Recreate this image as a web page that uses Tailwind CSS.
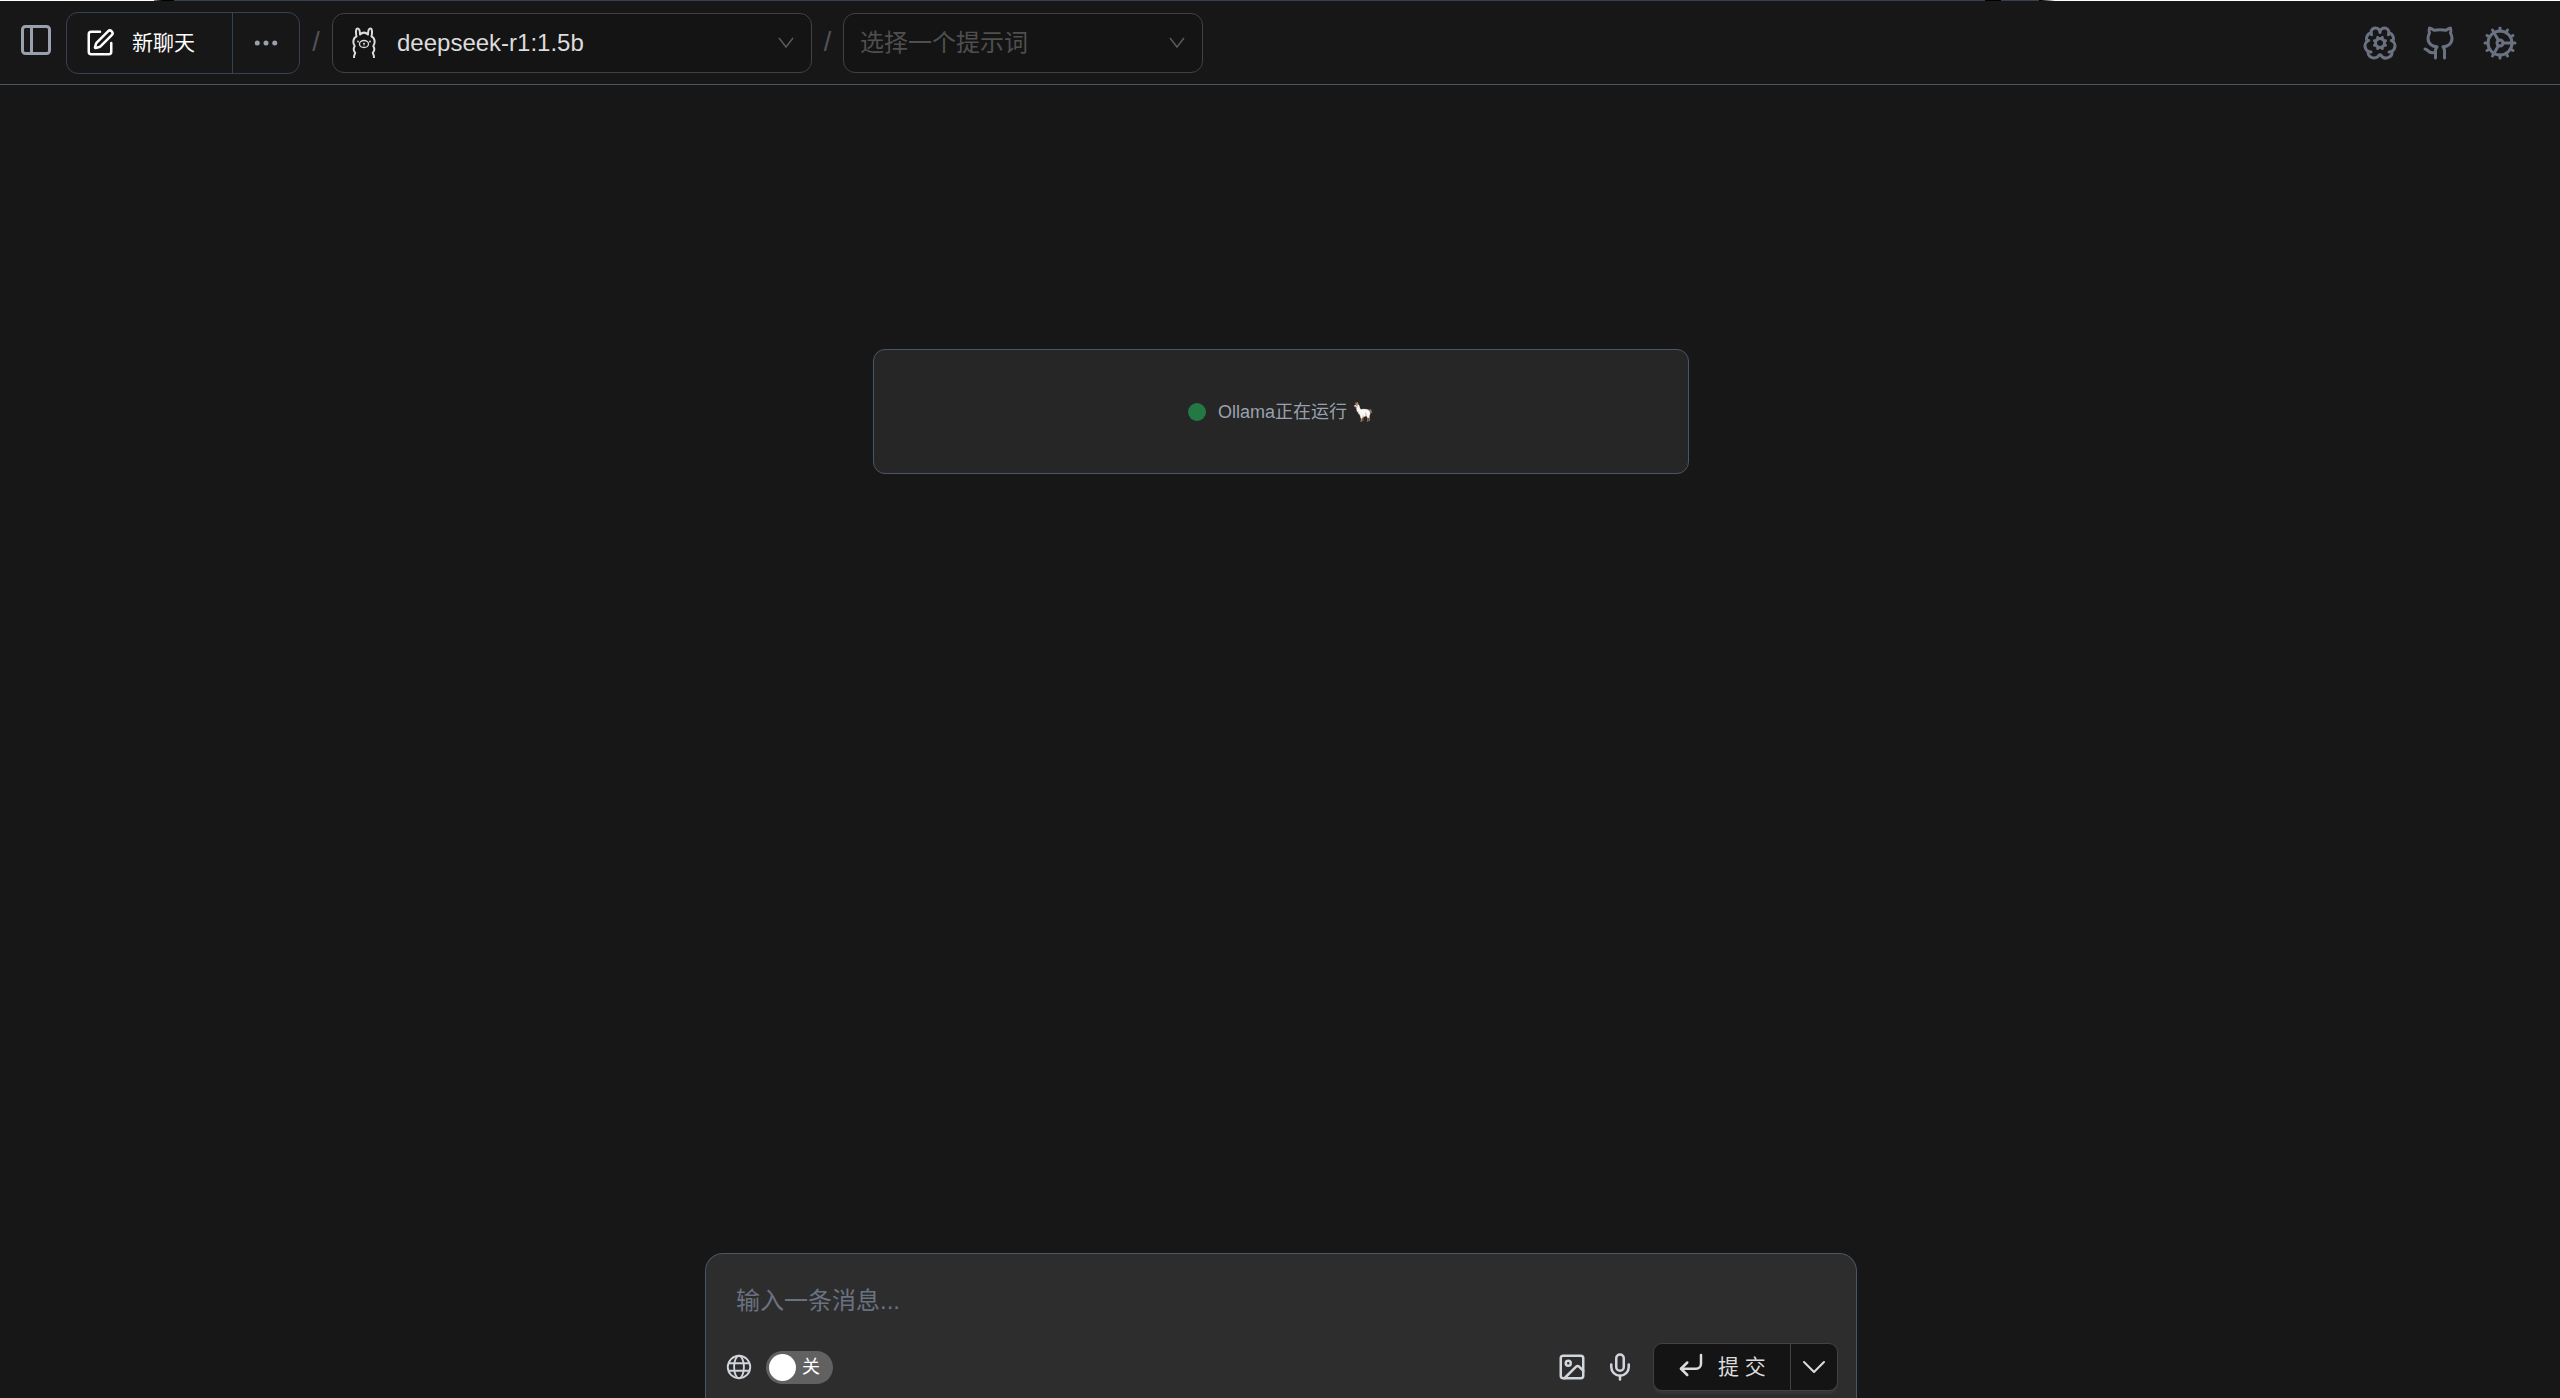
<!DOCTYPE html>
<html lang="zh-CN">
  <head>
    <meta charset="UTF-8" />
    <meta name="viewport" content="width=device-width, initial-scale=1.0" />
    <title>新聊天</title>
    <script src="https://cdn.jsdelivr.net/npm/@tailwindcss/browser@4"></script>
  </head>
  <body
    class="h-screen flex flex-col overflow-hidden bg-[#171717] font-['Liberation_Sans','Noto_Sans_CJK_SC',sans-serif] text-white"
  >
    <!-- browser frame edge -->
    <div class="flex h-px shrink-0 bg-[#374151]">
      <div class="w-[6%] bg-white"></div>
      <div class="w-5 bg-linear-to-r from-[#888888] via-black to-black"></div>
      <div class="flex-1"></div>
      <div class="w-4 bg-black"></div>
      <div class="w-[38px]"></div>
      <div class="w-4 bg-linear-to-r from-black to-white"></div>
      <div class="w-[505px] bg-white"></div>
    </div>

    <header
      class="flex h-[84px] shrink-0 items-center border-b border-gray-600 pl-[18px] pr-[42px]"
    >
      <button type="button" aria-label="Sidebar" class="mb-[6px] text-gray-400">
        <svg class="size-9" viewBox="0 0 24 24" fill="none" stroke="currentColor" stroke-width="2" stroke-linecap="round" stroke-linejoin="round">
          <rect width="18" height="18" x="3" y="3" rx="2" />
          <path d="M9 3v18" />
        </svg>
      </button>

      <div class="ml-3 flex h-[62px] rounded-xl border border-gray-700">
        <button type="button" class="flex w-[166px] items-center gap-[17px] border-r border-gray-700 pl-[18px] text-[21px]">
          <svg class="size-[30px]" viewBox="0 0 24 24" fill="none" stroke="currentColor" stroke-width="2" stroke-linecap="round" stroke-linejoin="round">
            <path d="M12 3H5a2 2 0 0 0-2 2v14a2 2 0 0 0 2 2h14a2 2 0 0 0 2-2v-7" />
            <path d="M18.375 2.625a1 1 0 0 1 3 3l-9.013 9.014a2 2 0 0 1-.853.505l-2.873.84a.5.5 0 0 1-.62-.62l.84-2.873a2 2 0 0 1 .506-.852z" />
          </svg>
          新聊天
        </button>
        <button type="button" aria-label="More" class="flex w-[66px] items-center justify-center text-gray-400">
          <svg class="size-[30px]" viewBox="0 0 24 24" fill="currentColor" stroke="currentColor" stroke-width="2">
            <circle cx="12" cy="12" r="1" />
            <circle cx="19" cy="12" r="1" />
            <circle cx="5" cy="12" r="1" />
          </svg>
        </button>
      </div>

      <span class="w-8 text-center text-[27px] text-zinc-600">/</span>

      <div class="relative h-[60px] w-[480px]">
        <select aria-label="Model" class="size-full appearance-none rounded-xl border border-[#424242] bg-[#141414] pl-16 text-2xl text-[#dcdcdc]">
          <option>deepseek-r1:1.5b</option>
        </select>
        <svg class="pointer-events-none absolute left-5 top-[14px] h-8 w-6 text-[#dcdcdc]" viewBox="0 0 24 32" fill="none" stroke="currentColor" stroke-width="2" stroke-linejoin="round">
          <path d="M2 31c0-2 .3-3.500 1.200-5C1.500 24 1.500 21 2.700 19 .4 16 1.200 10.500 4.500 9.500 3.500 5 4 1.500 5.500 1.500S8 4 8 7.500c2.500-2.300 5.500-2.300 8 0C16 4 17 1.500 18.500 1.500S20.500 5 19.500 9.500c3.300 1 4.100 6.500 1.800 9.500 1.200 2 1.200 5-.5 7 .9 1.500 1.200 3 1.200 5" />
          <ellipse cx="12" cy="17" rx="4.500" ry="3.500" stroke-width="1.300" />
          <path d="M11 16l1 .8 1-.8M12 16.800v1.700" stroke-width="1" />
          <circle cx="6" cy="14.500" r=".9" fill="currentColor" stroke="none" />
          <circle cx="18" cy="14.500" r=".9" fill="currentColor" stroke="none" />
        </svg>
        <svg class="pointer-events-none absolute right-[17px] top-[21px] size-[18px] text-[#5a5a5a]" viewBox="0 0 18 18" fill="none" stroke="currentColor" stroke-width="1.500">
          <path d="M2 4l7 9 7-9" />
        </svg>
      </div>

      <span class="w-[31px] text-center text-[27px] text-zinc-600">/</span>

      <div class="relative h-[60px] w-[360px]">
        <select aria-label="Prompt" class="size-full appearance-none rounded-xl border border-[#424242] bg-[#141414] pl-4 text-2xl text-[#4f4f4f]">
          <option>选择一个提示词</option>
        </select>
        <svg class="pointer-events-none absolute right-[17px] top-[21px] size-[18px] text-[#5a5a5a]" viewBox="0 0 18 18" fill="none" stroke="currentColor" stroke-width="1.500">
          <path d="M2 4l7 9 7-9" />
        </svg>
      </div>

      <nav class="ml-auto flex gap-6 text-gray-500">
        <a href="#" aria-label="Models">
          <svg class="size-9" viewBox="0 0 24 24" fill="none" stroke="currentColor" stroke-width="2" stroke-linecap="round" stroke-linejoin="round">
            <path d="m10.852 14.772-.383.923" />
            <path d="m10.852 9.228-.383-.923" />
            <path d="m13.148 14.772.382.924" />
            <path d="m13.531 8.305-.383.923" />
            <path d="m14.772 10.852.923-.383" />
            <path d="m14.772 13.148.923.383" />
            <path d="M17.598 6.500A3 3 0 1 0 12 5a3 3 0 0 0-5.630-1.446 3 3 0 0 0-.368 1.571 4 4 0 0 0-2.525 5.771" />
            <path d="M17.998 5.125a4 4 0 0 1 2.525 5.771" />
            <path d="M19.505 10.294a4 4 0 0 1-1.500 7.706" />
            <path d="M4.032 17.483A4 4 0 0 0 11.464 20c.18-.311.892-.311 1.072 0a4 4 0 0 0 7.432-2.516" />
            <path d="M4.500 10.291A4 4 0 0 0 6 18" />
            <path d="M6.002 5.125a3 3 0 0 0 .4 1.375" />
            <path d="m9.228 10.852-.923-.383" />
            <path d="m9.228 13.148-.923.383" />
            <circle cx="12" cy="12" r="3" />
          </svg>
        </a>
        <a href="#" aria-label="GitHub">
          <svg class="size-9" viewBox="0 0 24 24" fill="none" stroke="currentColor" stroke-width="2" stroke-linecap="round" stroke-linejoin="round">
            <path d="M15 22v-4a4.800 4.800 0 0 0-1-3.500c3 0 6-2 6-5.500.08-1.250-.27-2.480-1-3.500.28-1.150.28-2.350 0-3.500 0 0-1 0-3 1.500-2.640-.5-5.360-.5-8 0C6 2 5 2 5 2c-.3 1.150-.3 2.350 0 3.500A5.403 5.403 0 0 0 4 9c0 3.500 3 5.500 6 5.500-.39.49-.68 1.050-.85 1.650-.17.6-.22 1.230-.15 1.850v4" />
            <path d="M9 18c-4.510 2-5-2-7-2" />
          </svg>
        </a>
        <a href="#" aria-label="Settings">
          <svg class="size-9" viewBox="0 0 24 24" fill="none" stroke="currentColor" stroke-width="2" stroke-linecap="round" stroke-linejoin="round">
            <circle cx="12" cy="12" r="8" />
            <circle cx="12" cy="12" r="2" />
            <path d="M12 2v2M12 22v-2M17 20.660l-1-1.730M11 10.270 7 3.340M20.660 17l-1.730-1M3.340 7l1.730 1M14 12h8M2 12h2M20.660 7l-1.730 1M3.340 17l1.730-1M17 3.340l-1 1.730M11 13.730l-4 6.930" />
          </svg>
        </a>
      </nav>
    </header>

    <main class="flex min-h-0 flex-1 flex-col items-center justify-between pl-[2px] pt-[264px]">
      <section class="flex h-[125px] w-full max-w-[816px] items-center justify-center gap-3 rounded-xl border border-gray-600 bg-[#262626] text-lg text-gray-400">
        <span class="size-[18px] rounded-full bg-[#237843]"></span>
        <p>Ollama正在运行 🦙</p>
      </section>

      <form class="h-[145px] w-full max-w-[1152px] rounded-t-[18px] border border-b-0 border-gray-600 bg-[#2d2d2d] px-[18px] pt-[29px]">
        <input type="text" aria-label="输入一条消息" placeholder="输入一条消息..." class="block h-9 w-full px-3 text-2xl outline-none placeholder:text-gray-500" />

        <div class="mt-6 flex h-12 items-center">
          <label class="flex items-center gap-3 text-gray-300">
            <svg class="size-[30px]" viewBox="0 0 256 256" fill="none" stroke="currentColor" stroke-width="16">
              <circle cx="128" cy="128" r="96" />
              <ellipse cx="128" cy="128" rx="42" ry="96" />
              <path d="M37 96h182M37 160h182" />
            </svg>
            <span class="relative h-[33px] w-[67px]">
              <input type="checkbox" role="switch" aria-label="联网搜索" class="block size-full appearance-none rounded-full bg-[#616161] before:absolute before:left-[3px] before:top-[3px] before:size-[27px] before:rounded-full before:bg-white" />
              <span class="absolute right-[13px] top-0 text-lg leading-[33px] text-white">关</span>
            </span>
          </label>

          <div class="ml-auto flex items-center text-gray-300">
            <button type="button" aria-label="Image">
              <svg class="size-[30px]" viewBox="0 0 24 24" fill="none" stroke="currentColor" stroke-width="2" stroke-linecap="round" stroke-linejoin="round">
                <rect width="18" height="18" x="3" y="3" rx="2" />
                <circle cx="9" cy="9" r="2" />
                <path d="m21 15-3.086-3.086a2 2 0 0 0-2.828 0L6 21" />
              </svg>
            </button>
            <button type="button" aria-label="Voice" class="ml-[18px]">
              <svg class="size-[30px]" viewBox="0 0 24 24" fill="none" stroke="currentColor" stroke-width="2" stroke-linecap="round" stroke-linejoin="round">
                <path d="M12 2a3 3 0 0 0-3 3v7a3 3 0 0 0 6 0V5a3 3 0 0 0-3-3Z" />
                <path d="M19 10v2a7 7 0 0 1-14 0v-2" />
                <path d="M12 19v3" />
              </svg>
            </button>
            <div class="ml-[18px] flex h-12 rounded-[9px] border border-[#424242] bg-[#141414] text-[#dcdcdc] shadow-[0_3px_0_#ffffff0a]">
              <button type="submit" class="flex w-[137px] items-center gap-3 border-r border-[#424242] pl-[22px] text-[21px]">
                <svg class="mb-1 size-[30px]" viewBox="0 0 24 24" fill="none" stroke="currentColor" stroke-width="2" stroke-linecap="round" stroke-linejoin="round">
                  <path d="M20 4v7a4 4 0 0 1-4 4H4" />
                  <path d="m9 10-5 5 5 5" />
                </svg>
                提 交
              </button>
              <button type="button" aria-label="Options" class="flex w-[46px] items-center justify-center">
                <svg class="size-6" viewBox="0 0 24 24" fill="none" stroke="currentColor" stroke-width="2" stroke-linecap="round" stroke-linejoin="round">
                  <path d="m2 7 10 10 10-10" />
                </svg>
              </button>
            </div>
          </div>
        </div>
      </form>
    </main>
  </body>
</html>
